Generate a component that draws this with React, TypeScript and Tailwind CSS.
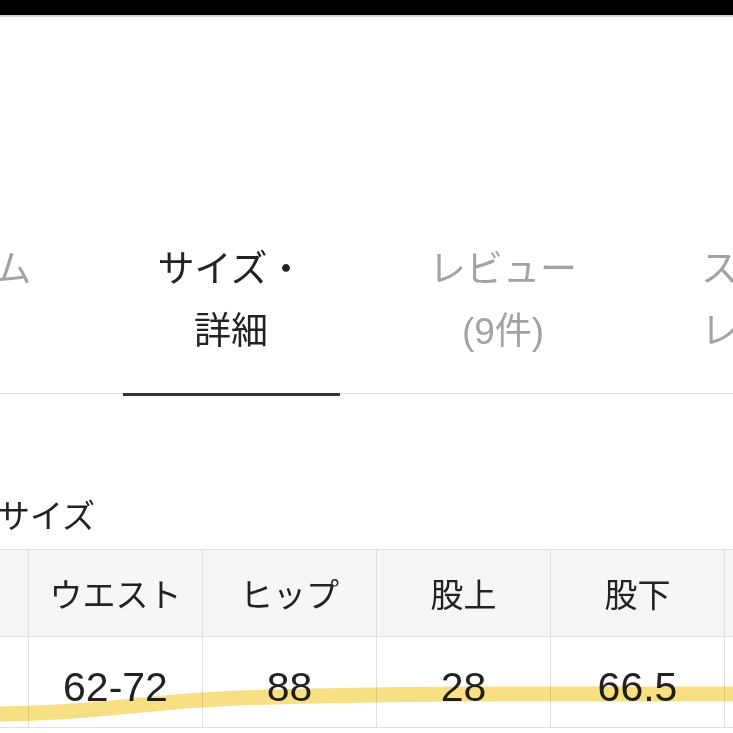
import React from 'react';

const font = { fontFamily: '"Liberation Sans", "Noto Sans CJK JP", sans-serif' };

const tabs = [
  { lines: ['アイテム', '説明'], active: false },
  { lines: ['サイズ・', '詳細'], active: true },
  { lines: ['レビュー', '(9件)'], active: false },
  { lines: ['スタッフ', 'レビュー'], active: false },
];

const headers = ['サイズ', 'ウエスト', 'ヒップ', '股上', '股下', '裾幅'];
const values = ['S', '62-72', '88', '28', '66.5', '18'];

export default function App() {
  return (
    <div className="relative w-[733px] h-[733px] overflow-hidden bg-white text-[#222]" style={font}>
      <div className="h-[17px] bg-black border-b-2 border-[#d4d4d4]" />

      {/* tabs */}
      <div className="mt-[222px] border-b border-[#e3e3e3]">
        <div className="flex ml-[-177px] -mb-[3px]">
          {tabs.map((t, i) => (
            <div key={i} className="w-[272px] shrink-0 flex justify-center">
              <div
                className={
                  'w-[217px] pb-[30px] text-center text-[37px] leading-[62px] ' +
                  (t.active ? 'text-[#222] border-b-[3px] border-[#333]' : 'text-[#a3a3a3] border-b-[3px] border-transparent')
                }
              >
                {t.lines.map((l, j) => (
                  <div key={j}>{l}</div>
                ))}
              </div>
            </div>
          ))}
        </div>
      </div>

      <div className="mt-[99px] ml-[-3px] text-[33px] leading-[48px]">サイズ</div>

      {/* size table */}
      <div className="mt-[8px] ml-[-146px] w-[1044px] grid grid-cols-[repeat(6,174px)] border-t border-l border-[#e0e0e0]">
        {headers.map((h) => (
          <div key={h} className="h-[87px] bg-[#f6f6f6] border-r border-b border-[#e0e0e0] flex items-center justify-center text-[33px] pt-[6px]">
            {h}
          </div>
        ))}
        {values.map((v, i) => (
          <div key={i} className="h-[91px] bg-white border-r border-b border-[#e0e0e0] flex items-center justify-center text-[41px] pt-[12px]">
            {v}
          </div>
        ))}
      </div>

      {/* highlighter stroke */}
      <svg className="absolute left-0 top-0 pointer-events-none mix-blend-multiply" width="733" height="733" viewBox="0 0 733 733">
        <path
          d="M -10 714 C 90 714, 150 701, 240 698 S 380 694, 500 694 L 740 694"
          fill="none"
          stroke="#f6d96f"
          strokeWidth="15"
          strokeLinecap="round"
          opacity="0.85"
        />
      </svg>
    </div>
  );
}
